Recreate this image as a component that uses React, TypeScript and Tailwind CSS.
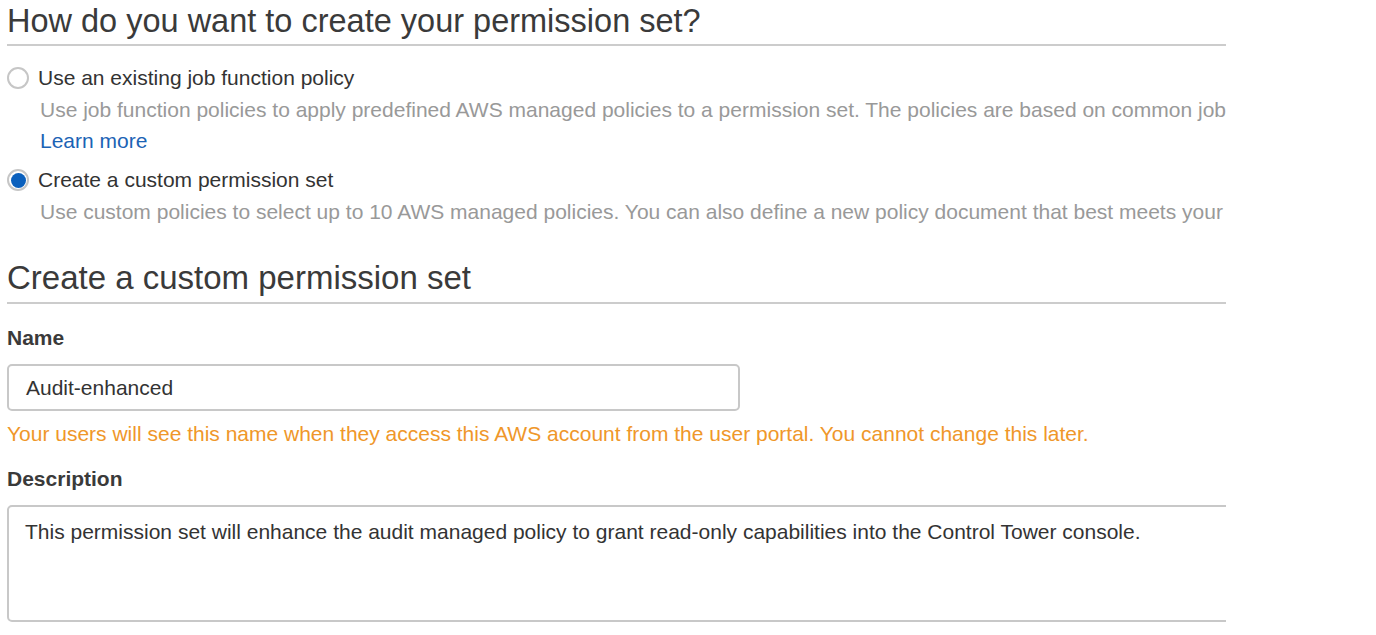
import React from "react";

function Radio({ checked }: { checked?: boolean }) {
  return (
    <span className="flex h-[22px] w-[22px] shrink-0 items-center justify-center rounded-full border-2 border-[#c6c6c6] bg-white">
      {checked && <span className="h-[15px] w-[15px] rounded-full bg-[#0b60bd]" />}
    </span>
  );
}

export default function App() {
  return (
    <div className="h-[635px] w-[1376px] overflow-hidden bg-white font-['Liberation_Sans',Arial,sans-serif] text-[#333]">
      <div className="w-[1226px] overflow-hidden pl-[7px]">
        <h2 className="pt-[3px] text-[32.5px] leading-[36px] text-[#3a3a3a]">How do you want to create your permission set?</h2>
        <div className="mt-[5px] h-[2px] bg-[#cccccc]" />
        <div className="mt-[20px] flex items-center gap-[9px]">
          <Radio />
          <span className="text-[21px] leading-[24px] text-[#333]">Use an existing job function policy</span>
        </div>
        <p className="mt-[8px] whitespace-nowrap pl-[33px] text-[21px] leading-[24px] text-[#999]">
          Use job function policies to apply predefined AWS managed policies to a permission set. The policies are based on common job
        </p>
        <a className="mt-[7px] block pl-[33px] text-[21px] leading-[24px] text-[#1b63b5]">Learn more</a>
        <div className="mt-[15px] flex items-center gap-[9px]">
          <Radio checked />
          <span className="text-[21px] leading-[24px] text-[#333]">Create a custom permission set</span>
        </div>
        <p className="mt-[8px] whitespace-nowrap pl-[33px] text-[21px] leading-[24px] text-[#999]">
          Use custom policies to select up to 10 AWS managed policies. You can also define a new policy document that best meets your
        </p>
        <h2 className="mt-[36px] text-[33px] leading-[36px] text-[#3a3a3a]">Create a custom permission set</h2>
        <div className="mt-[6px] h-[2px] bg-[#cccccc]" />
        <div className="mt-[22px] text-[21px] font-bold leading-[24px] text-[#3a3a3a]">Name</div>
        <div className="mt-[14px] flex h-[47px] w-[733px] items-center rounded-[5px] border-2 border-[#c8c8c8] pl-[17px] text-[21px] text-[#333]">
          Audit-enhanced
        </div>
        <p className="mt-[11px] text-[21px] leading-[24px] text-[#ef972a]">
          Your users will see this name when they access this AWS account from the user portal. You cannot change this later.
        </p>
        <div className="mt-[21px] text-[21px] font-bold leading-[24px] text-[#3a3a3a]">Description</div>
        <div className="mt-[14px] h-[117px] w-[1400px] rounded-[5px] border-2 border-[#c8c8c8] pl-[16px] pt-[13px] text-[21px] leading-[24px] text-[#333]">
          This permission set will enhance the audit managed policy to grant read-only capabilities into the Control Tower console.
        </div>
      </div>
    </div>
  );
}
